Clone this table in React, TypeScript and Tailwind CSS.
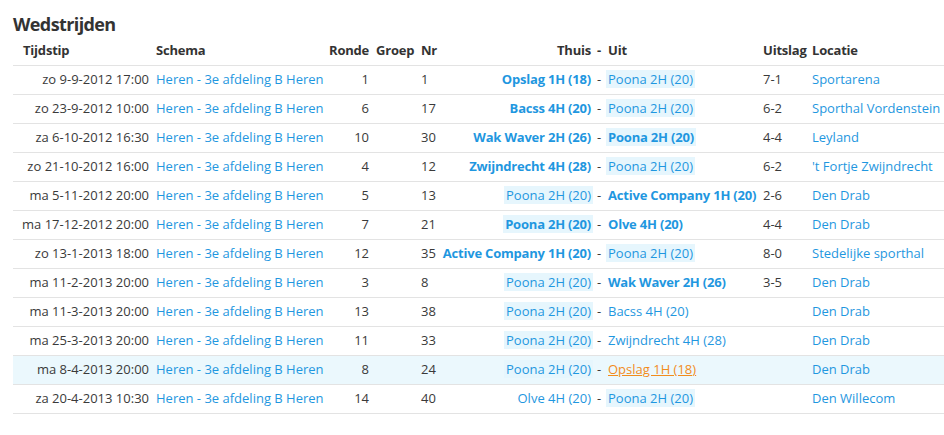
import React from "react";

type Team = { name: string; bold?: boolean; hl?: boolean; orange?: boolean };
type Row = {
  t: string;
  r: string;
  nr: string;
  home: Team;
  away: Team;
  res: string;
  loc: string;
  active?: boolean;
};

const P = (bold = false): Team => ({ name: "Poona 2H (20)", bold, hl: true });

const rows: Row[] = [
  { t: "zo 9-9-2012 17:00", r: "1", nr: "1", home: { name: "Opslag 1H (18)", bold: true }, away: P(), res: "7-1", loc: "Sportarena" },
  { t: "zo 23-9-2012 10:00", r: "6", nr: "17", home: { name: "Bacss 4H (20)", bold: true }, away: P(), res: "6-2", loc: "Sporthal Vordenstein" },
  { t: "za 6-10-2012 16:30", r: "10", nr: "30", home: { name: "Wak Waver 2H (26)", bold: true }, away: P(true), res: "4-4", loc: "Leyland" },
  { t: "zo 21-10-2012 16:00", r: "4", nr: "12", home: { name: "Zwijndrecht 4H (28)", bold: true }, away: P(), res: "6-2", loc: "'t Fortje Zwijndrecht" },
  { t: "ma 5-11-2012 20:00", r: "5", nr: "13", home: P(), away: { name: "Active Company 1H (20)", bold: true }, res: "2-6", loc: "Den Drab" },
  { t: "ma 17-12-2012 20:00", r: "7", nr: "21", home: P(true), away: { name: "Olve 4H (20)", bold: true }, res: "4-4", loc: "Den Drab" },
  { t: "zo 13-1-2013 18:00", r: "12", nr: "35", home: { name: "Active Company 1H (20)", bold: true }, away: P(), res: "8-0", loc: "Stedelijke sporthal" },
  { t: "ma 11-2-2013 20:00", r: "3", nr: "8", home: P(), away: { name: "Wak Waver 2H (26)", bold: true }, res: "3-5", loc: "Den Drab" },
  { t: "ma 11-3-2013 20:00", r: "13", nr: "38", home: P(), away: { name: "Bacss 4H (20)" }, res: "", loc: "Den Drab" },
  { t: "ma 25-3-2013 20:00", r: "11", nr: "33", home: P(), away: { name: "Zwijndrecht 4H (28)" }, res: "", loc: "Den Drab" },
  { t: "ma 8-4-2013 20:00", r: "8", nr: "24", home: P(), away: { name: "Opslag 1H (18)", orange: true }, res: "", loc: "Den Drab", active: true },
  { t: "za 20-4-2013 10:30", r: "14", nr: "40", home: { name: "Olve 4H (20)" }, away: P(), res: "", loc: "Den Willecom" },
];

const GRID =
  "grid grid-cols-[140px_173px_47px_45px_22px_154px_10px_155px_49px_1fr]";

function TeamLabel({ team }: { team: Team }) {
  if (team.orange) {
    return <span className="text-[#f28c1c] underline px-[2px]">{team.name}</span>;
  }
  return (
    <span
      className={
        "px-[2px] text-[#1f97e0] " +
        (team.bold ? "font-bold tracking-[-0.2px] " : "") +
        (team.hl ? "bg-[#e6f6fd]" : "")
      }
    >
      {team.name}
    </span>
  );
}

export default function App() {
  return (
    <div
      className="w-[944px] h-[435px] bg-white overflow-hidden text-[13px] leading-[18px] text-[#3a3a3a]"
      style={{ fontFamily: '"Open Sans", "Liberation Sans", sans-serif' }}
    >
      <h1 className="pl-[13px] pt-[12px] text-[18px] leading-[24px] font-bold text-[#333] tracking-[-0.6px]">
        Wedstrijden
      </h1>
      <div className="ml-[13px] mt-[5px]">
        <div className={GRID + " font-bold text-[#333] tracking-[-0.2px] pt-0 pb-[6px] border-b border-[#e3e3e3]"}>
          <div className="pl-[10px]">Tijdstip</div>
          <div className="pl-[3px]">Schema</div>
          <div className="pl-[3px]">Ronde</div>
          <div className="pl-[3px]">Groep</div>
          <div className="pl-[3px]">Nr</div>
          <div className="text-right pr-[3px]">Thuis</div>
          <div className="text-center">-</div>
          <div className="pl-[4px]">Uit</div>
          <div className="pl-[4px]">Uitslag</div>
          <div className="pl-[4px]">Locatie</div>
        </div>
        {rows.map((row, i) => (
          <div
            key={i}
            className={
              GRID +
              " pt-[4px] pb-[6px] border-b border-[#e3e3e3] whitespace-nowrap " +
              (row.active ? "bg-[#ebf8fd]" : "")
            }
          >
            <div className="text-right pr-[4px]">{row.t}</div>
            <div className="pl-[3px] text-[#1f97e0]">Heren - 3e afdeling B Heren</div>
            <div className="text-right pr-[4px]">{row.r}</div>
            <div />
            <div className="pl-[3px]">{row.nr}</div>
            <div className="text-right pr-[1px]">
              <TeamLabel team={row.home} />
            </div>
            <div className="text-center">-</div>
            <div className="pl-[2px]">
              <TeamLabel team={row.away} />
            </div>
            <div className="pl-[4px]">{row.res}</div>
            <div className="pl-[4px] text-[#1f97e0]">{row.loc}</div>
          </div>
        ))}
      </div>
    </div>
  );
}
